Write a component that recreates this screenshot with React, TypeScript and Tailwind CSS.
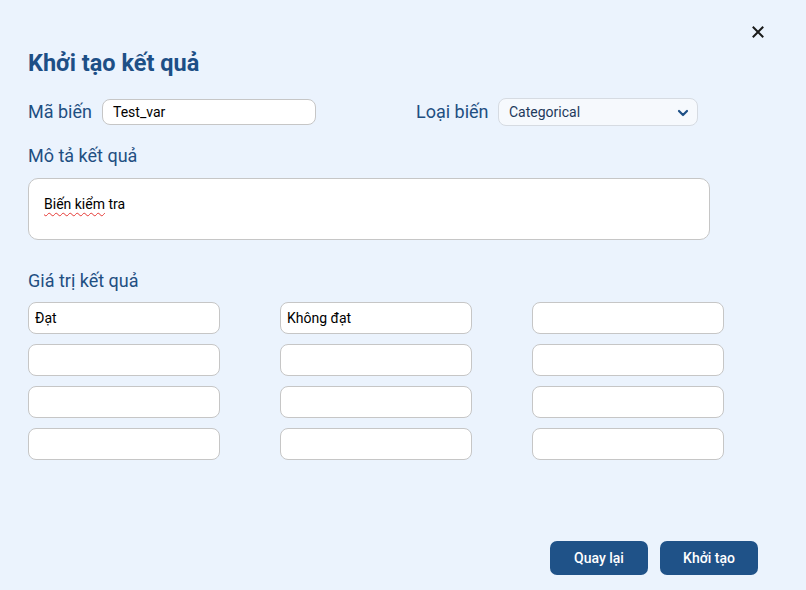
import React from "react";

const inputCls =
  "w-[192px] h-[32px] rounded-[8px] border border-[#c6c6c6] bg-white px-[6px] text-[14px] text-black outline-none";

export default function App() {
  const values = ["Đạt", "Không đạt", "", "", "", "", "", "", "", "", "", ""];
  return (
    <div
      className="relative w-[806px] h-[590px] bg-[#ebf3fd] overflow-hidden"
      style={{ fontFamily: "Roboto, 'Noto Sans', sans-serif" }}
    >
      <button className="absolute left-[750px] top-[24px] w-[16px] h-[16px] flex items-center justify-center text-[#1a1a1a]">
        <svg width="12" height="12" viewBox="0 0 12 12">
          <path d="M1.5 1.5 L10.5 10.5 M10.5 1.5 L1.5 10.5" stroke="#1a1a1a" strokeWidth="2" strokeLinecap="square" />
        </svg>
      </button>

      <div className="flex flex-col pl-[28px] pt-[48px]">
        <h1 className="text-[23.5px] leading-[30px] font-bold text-[#1d4f86]">Khởi tạo kết quả</h1>

        <div className="flex items-center mt-[20px] h-[28px]">
          <div className="flex items-center w-[388px]">
            <label className="text-[18px] leading-[24px] text-[#1f4f82] w-[74px]">Mã biến</label>
            <input
              defaultValue="Test_var"
              className="w-[214px] h-[26px] rounded-[8px] border border-[#c6c6c6] bg-white px-[10px] text-[14px] text-black outline-none"
            />
          </div>
          <div className="flex items-center">
            <label className="text-[18px] leading-[24px] text-[#1f4f82] w-[82px]">Loại biến</label>
            <div className="relative w-[200px] h-[28px] rounded-[8px] border border-[#d6dbe2] bg-[#f6f9fd] flex items-center pl-[10px]">
              <span className="text-[14px] text-[#1e3a5c]">Categorical</span>
              <svg className="absolute right-[8px] top-[9px]" width="12" height="10" viewBox="0 0 12 10">
                <path d="M2 3 L6 7 L10 3" fill="none" stroke="#1d4f86" strokeWidth="2.2" strokeLinecap="round" strokeLinejoin="round" />
              </svg>
            </div>
          </div>
        </div>

        <label className="mt-[18px] text-[18px] leading-[24px] text-[#1f4f82]">Mô tả kết quả</label>
        <div className="mt-[10px] w-[682px] h-[62px] rounded-[10px] border border-[#c6c6c6] bg-white px-[15px] pt-[13px]">
          <span className="text-[14px] leading-[20px] text-black underline decoration-wavy decoration-[#e53935] decoration-[1px] underline-offset-[3px]">
            Biến kiểm
          </span>
          <span className="text-[14px] leading-[20px] text-black"> tra</span>
        </div>

        <label className="mt-[29px] text-[18px] leading-[24px] text-[#1f4f82]">Giá trị kết quả</label>
        <div className="mt-[9px] grid grid-cols-[192px_192px_192px] gap-x-[60px] gap-y-[10px]">
          {values.map((v, i) => (
            <input key={i} defaultValue={v} className={inputCls} />
          ))}
        </div>

        <div className="mt-[81px] flex justify-end gap-[12px] pr-[48px]">
          <button className="w-[98px] h-[34px] rounded-[7px] bg-[#1f5288] text-white text-[14px] font-medium">Quay lại</button>
          <button className="w-[98px] h-[34px] rounded-[7px] bg-[#1f5288] text-white text-[14px] font-medium">Khởi tạo</button>
        </div>
      </div>
    </div>
  );
}
